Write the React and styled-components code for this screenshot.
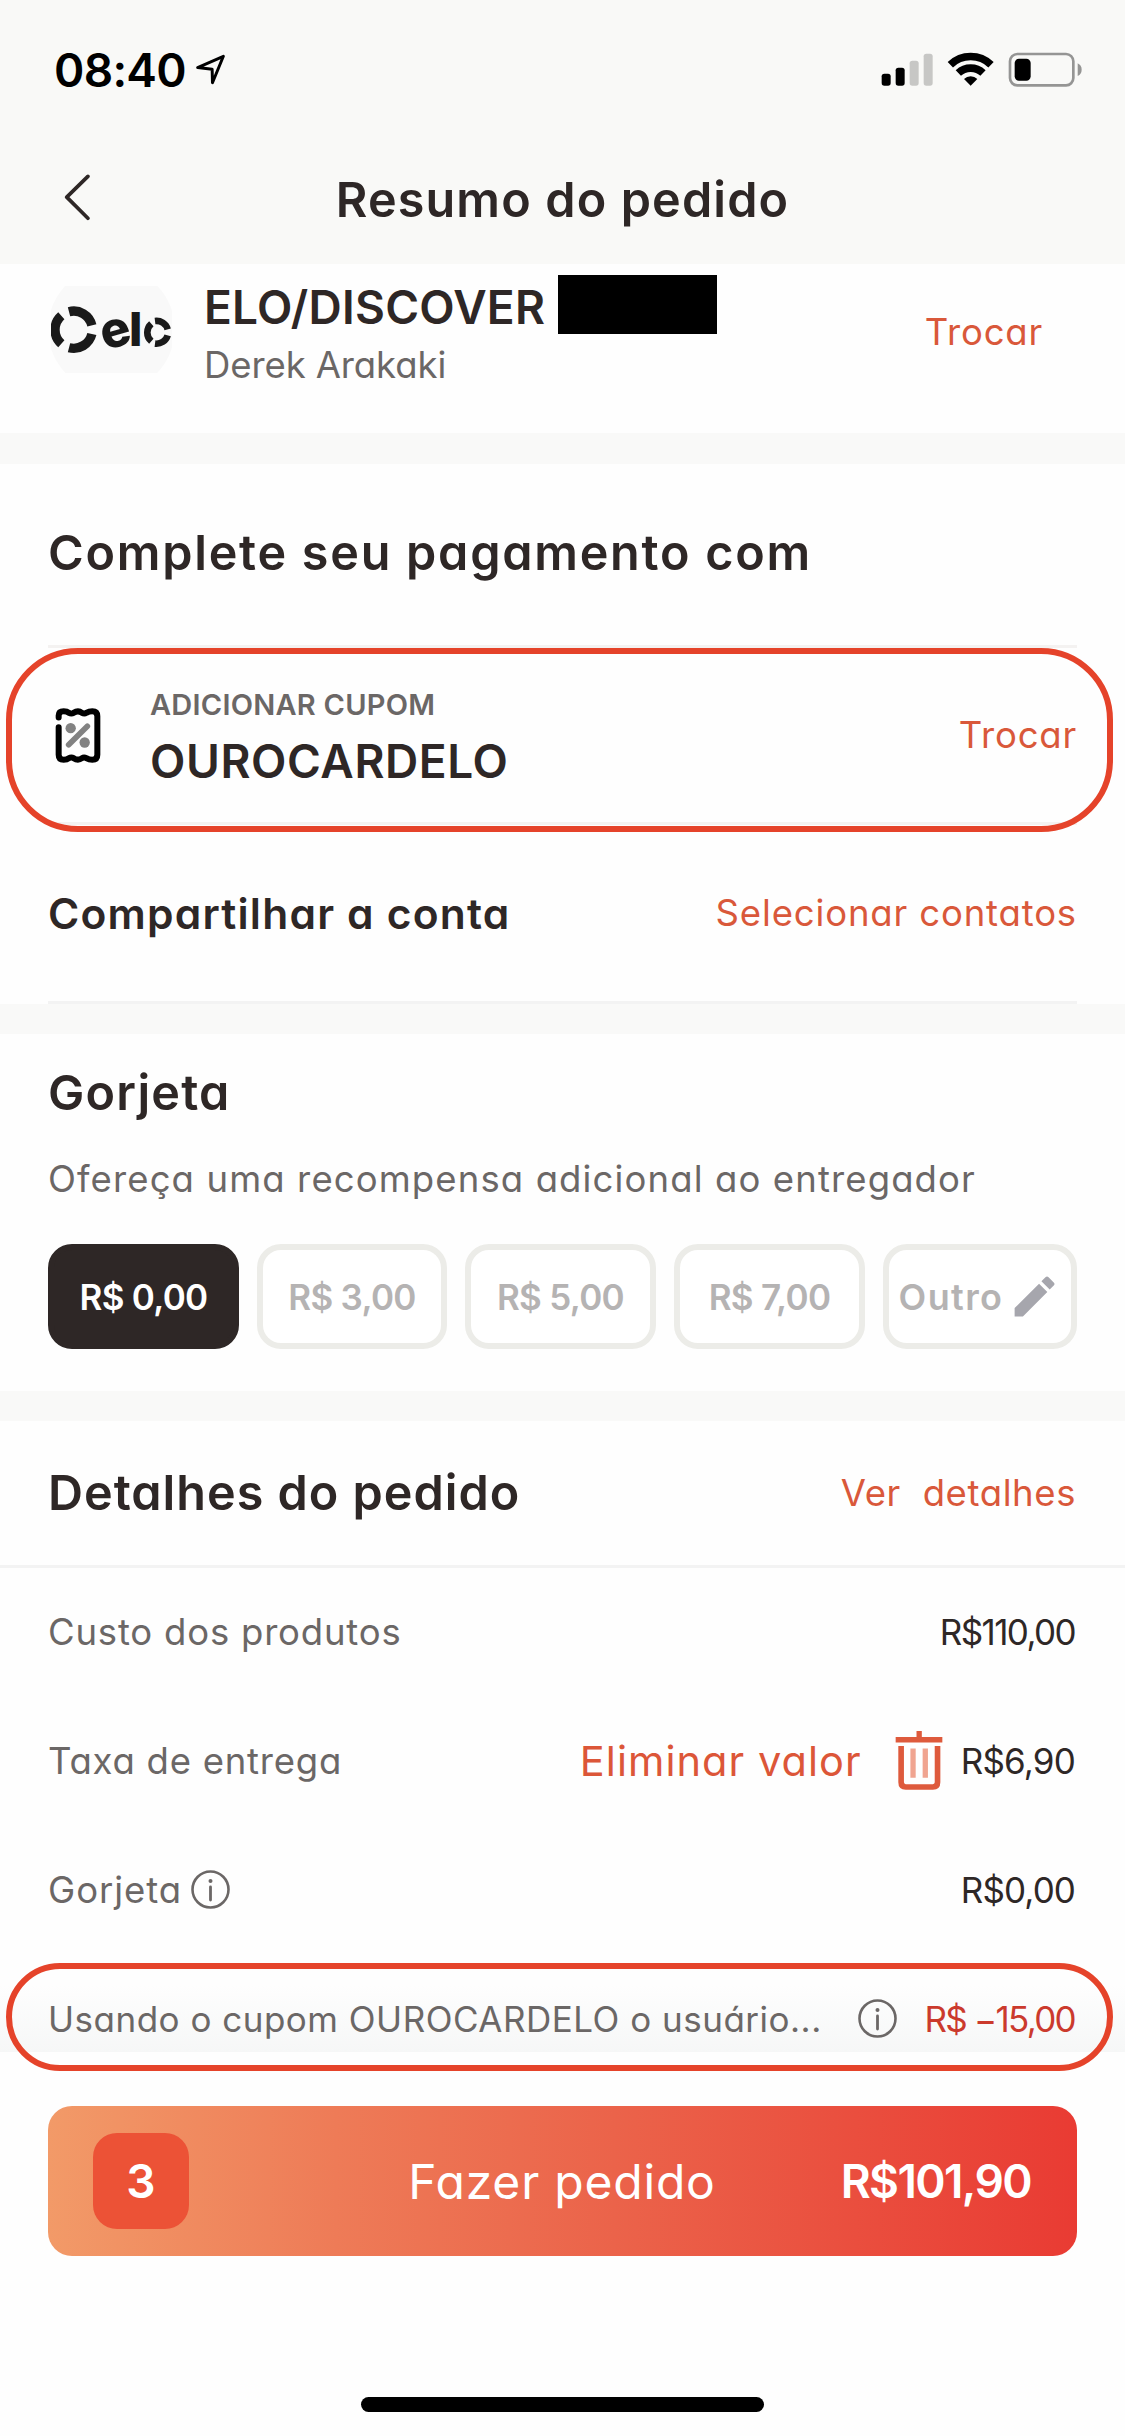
import React from 'react'
import styled, { createGlobalStyle } from 'styled-components'
import { MdEdit } from 'react-icons/md'


const tips = [
    { label: 'R$ 0,00', width: 191, active: true },
    { label: 'R$ 3,00', width: 190 },
    { label: 'R$ 5,00', width: 191 },
    { label: 'R$ 7,00', width: 191 },
]

const InfoIcon = () => (
    <svg width="39" height="39" viewBox="0 0 39 39" fill="none" stroke="#6b6766">
        <circle cx="19.5" cy="19.5" r="18" strokeWidth="2.6" />
        <circle cx="19.5" cy="11" r="2" fill="#6b6766" stroke="none" />
        <path d="M19.5 17v13" strokeWidth="2.8" strokeLinecap="round" />
    </svg>
)

const TrashIcon = () => (
    <svg width="48" height="61" viewBox="107 95 145 182">
        <path d="M109 115h63V97h16v18h62v17H109z" fill="#de5a3c" />
        <path d="M125.500 142V252q0 14 14 14h82q14 0 14-14V142" fill="none" stroke="#de5a3c" strokeWidth="17" />
        <path d="M161.500 150v88M198.500 150v88" stroke="#f0a490" strokeWidth="16" />
    </svg>
)

const CouponIcon = () => (
    <svg width="46" height="57" viewBox="76 78 138 170" fill="none">
        <path
            d="M87 109V103Q87 90 102 90Q112 90 118 95Q125 99 132 95Q145 86 157 95Q164 99 170 95Q178 90 188 90Q203 90 203 105V221Q203 236 188 236Q178 236 170 231Q163 227 157 231Q145 240 132 231Q125 227 118 231Q112 236 102 236Q87 236 87 221V138"
            stroke="#000" strokeWidth="18" strokeLinecap="round" strokeLinejoin="round"
        />
        <circle cx="123" cy="141" r="15.500" fill="#828282" />
        <circle cx="165" cy="184" r="15.500" fill="#828282" />
        <path d="M117 191L173 135" stroke="#828282" strokeWidth="17" strokeLinecap="round" />
    </svg>
)

const EloLogo = () => (
    <svg width="121" height="87" viewBox="33 33 363 261">
        <circle cx="214" cy="163" r="190" fill="#f9f9f9" />
        <g fill="none" stroke="#1a1a1a" strokeWidth="28">
            <path d="M64 122A56 56 0 0 0 64 206" />
            <path d="M87 110A56 56 0 0 1 155.600 151" />
            <path d="M155.600 177A56 56 0 0 1 87 218" />
        </g>
        <g fill="none" stroke="#1a1a1a" strokeWidth="20">
            <path d="M334 146A35 35 0 0 0 334 199" />
            <path d="M345 138A35 35 0 0 1 383 163" />
            <path d="M383 181A35 35 0 0 1 345 206" />
        </g>
        <LogoText x="181" y="215" $s={150} transform="rotate(-16 228 172)">e</LogoText>
        <LogoText x="267" y="214" $s={142}>l</LogoText>
    </svg>
)

function StatusIcons() {
    return (
        <svg width="202" height="36" viewBox="64 64 606 108">
            <rect x="66" y="129" width="27" height="36" rx="8" />
            <rect x="108" y="111" width="27" height="54" rx="8" />
            <rect x="150" y="90" width="27" height="75" rx="8" fill="#c7c7c5" />
            <rect x="192" y="69" width="27" height="96" rx="8" fill="#c7c7c5" />
            <g fill="none" stroke="#000" strokeWidth="23">
                <path d="M272 102A88 88 0 0 1 394 102" />
                <path d="M296 127A54 54 0 0 1 370 127" />
            </g>
            <path d="M333 165L313 145A29 29 0 0 1 353 145Z" />
            <rect x="451" y="70" width="190" height="94" rx="22" fill="none" stroke="#959594" strokeWidth="8" />
            <rect x="465" y="84" width="48" height="66" rx="13" />
            <path d="M654 98Q666 104 666 117Q666 130 654 136Z" fill="#959594" />
        </svg>
    )
}

function App() {
    return (
        <Screen>
            <GlobalStyle />

            <StatusBar>
                <Clock>08:40</Clock>
                <svg width="31" height="31" viewBox="464 40 94 92">
                    <path d="M472 80L550 46L517 126L516 85Z" fill="none" stroke="#000" strokeWidth="9" strokeLinejoin="round" />
                </svg>
                <Spacer />
                <StatusIcons />
            </StatusBar>

            <Header>
                <BackButton>
                    <svg width="27" height="47" viewBox="72 400 80 140">
                        <path d="M143 407L80 469L143 532" fill="none" stroke="#2e2726" strokeWidth="11" strokeLinecap="round" strokeLinejoin="round" />
                    </svg>
                </BackButton>
                <HeaderTitle $ls={1.15}>Resumo do pedido</HeaderTitle>
            </Header>

            <CardSection>
                <LogoBox><EloLogo /></LogoBox>
                <CardInfo>
                    <CardName>
                        <CardBrand>ELO/DISCOVER</CardBrand>
                        <HiddenDigits />
                    </CardName>
                    <Label $ls={-0.1}>Derek Arakaki</Label>
                </CardInfo>
                <Spacer />
                <CardLink $ls={0.8}>Trocar</CardLink>
            </CardSection>

            <Band $h={31} />

            <PaymentSection>
                <PaymentTitle>
                    <Title $ls={1.750}>Complete seu pagamento com</Title>
                </PaymentTitle>
                <CouponRow>
                    <Highlight $top={0} $h={184} $r={72} />
                    <CouponIcon />
                    <CouponInfo>
                        <CouponLabel>ADICIONAR CUPOM</CouponLabel>
                        <CouponCode>OUROCARDELO</CouponCode>
                    </CouponInfo>
                    <Spacer />
                    <Link $ls={0.8}>Trocar</Link>
                </CouponRow>
                <ShareRow>
                    <ShareTitle>Compartilhar a conta</ShareTitle>
                    <Spacer />
                    <Link $ls={0.85}>Selecionar contatos</Link>
                </ShareRow>
            </PaymentSection>

            <Band $h={30} />

            <TipSection>
                <Title $ls={1.200}>Gorjeta</Title>
                <TipText $ls={1.12}>Ofereça uma recompensa adicional ao entregador</TipText>
                <TipList>
                    {tips.map(tip => (
                        <TipButton key={tip.label} $w={tip.width} $active={tip.active}>{tip.label}</TipButton>
                    ))}
                    <TipButton $w={194} $wide>
                        Outro <MdEdit size={53} color="#a6a6ad" />
                    </TipButton>
                </TipList>
            </TipSection>

            <Band $h={30} />

            <DetailsHeader>
                <Title $ls={1}>Detalhes do pedido</Title>
                <Spacer />
                <Link $ls={0.6}>{'Ver\u00a0 detalhes'}</Link>
            </DetailsHeader>

            <DetailRow>
                <Label $ls={0.8}>Custo dos produtos</Label>
                <Spacer />
                <Price $ls={-1.6}>R$110,00</Price>
            </DetailRow>
            <DetailRow>
                <Label $ls={0.76}>Taxa de entrega</Label>
                <Spacer />
                <RemoveFee>Eliminar valor</RemoveFee>
                <TrashIcon />
                <Price $ls={-0.8} $left={18}>R$6,90</Price>
            </DetailRow>
            <DetailRow>
                <Label $ls={0.95}>Gorjeta</Label>
                <InfoWrap $left={9}><InfoIcon /></InfoWrap>
                <Spacer />
                <Price $ls={-0.9}>R$0,00</Price>
            </DetailRow>
            <DiscountRow>
                <Highlight $top={8} $h={108} $r={55} />
                <DiscountLabel $ls={0.5}>Usando o cupom OUROCARDELO o usuário...</DiscountLabel>
                <Spacer />
                <InfoWrap><InfoIcon /></InfoWrap>
                <Price $ls={-1.7} $left={27} $discount>R$ −15,00</Price>
            </DiscountRow>

            <OrderButton>
                <Count>3</Count>
                <OrderLabel>Fazer pedido</OrderLabel>
                <Total>R$101,90</Total>
            </OrderButton>

            <HomeIndicator />
        </Screen>
    )
}

export default App

const GlobalStyle = createGlobalStyle`
    body {
        margin: 0;
        background: #fefefe;
    }
`
const Screen = styled.div`
    width: 1125px;
    height: 2436px;
    display: flex;
    flex-direction: column;
    overflow: hidden;
    background: #fefefe;
    color: #2e2726;
    font-family: Inter, sans-serif;
    font-feature-settings: 'cv11';
    white-space: nowrap;

    svg {
        display: block;
        flex-shrink: 0;
    }
`
const Spacer = styled.div`
    flex: 1;
`
const Band = styled.div`
    height: ${p => p.$h}px;
    flex-shrink: 0;
    background: #f9f9f8;
`
const Title = styled.h1`
    margin: 0;
    font-size: 48.5px;
    font-weight: 600;
    line-height: 58px;
    letter-spacing: ${p => p.$ls}px;
`
const Label = styled.div`
    color: #6b6766;
    font-size: 36.5px;
    line-height: 58px;
    letter-spacing: ${p => p.$ls}px;
`
const Link = styled.div`
    color: #d9583a;
    font-size: 36.5px;
    line-height: 58px;
    letter-spacing: ${p => p.$ls}px;
    padding-bottom: 1px;
`

const StatusBar = styled.div`
    height: 140px;
    flex-shrink: 0;
    display: flex;
    align-items: center;
    box-sizing: border-box;
    padding: 0 42px 1px 54px;
    background: #f9f9f7;
    color: #000;
`
const Clock = styled.div`
    width: 141px;
    font-size: 46px;
    font-weight: 600;
    letter-spacing: -0.7px;
`
const Header = styled.div`
    height: 124px;
    flex-shrink: 0;
    display: grid;
    grid-template-columns: 1fr auto 1fr;
    align-items: center;
    box-sizing: border-box;
    padding: 4px 48px 0;
    background: #f9f9f7;
`
const HeaderTitle = styled(Title)`
    padding-bottom: 9px;
`
const BackButton = styled.div`
    padding: 0 0 14px 16px;
`

const CardSection = styled.div`
    height: 169px;
    flex-shrink: 0;
    display: flex;
    align-items: center;
    box-sizing: border-box;
    padding: 14px 82px 39px 51px;
`
const LogoBox = styled.div`
    margin: 0 32px 13px 0;
`
const LogoText = styled.text`
    font-size: ${p => p.$s}px;
    font-weight: 800;
    fill: #1a1a1a;
`
const CardInfo = styled.div`
`
const CardName = styled.div`
    display: flex;
    align-items: center;
    height: 58px;
`
const CardBrand = styled.div`
    width: 354px;
    font-size: 46px;
    font-weight: 600;
    letter-spacing: 0.25px;
`
const HiddenDigits = styled.div`
    width: 159px;
    height: 59px;
    margin-bottom: 5px;
    background: #000;
`
const CardLink = styled(Link)`
    margin-bottom: 8px;
`

const PaymentSection = styled.div`
    flex-shrink: 0;
    padding: 0 48px;
`
const PaymentTitle = styled.div`
    height: 184px;
    display: flex;
    align-items: center;
    box-sizing: border-box;
    padding-bottom: 3px;
    border-bottom: 3px solid #f4f2f1;
`
const CouponRow = styled.div`
    position: relative;
    height: 177px;
    display: flex;
    align-items: center;
    box-sizing: border-box;
    padding-left: 7px;
    border-bottom: 3px solid #f4f2f1;
`
/* red outline drawn over the rows affected by the coupon */
const Highlight = styled.div`
    position: absolute;
    left: -42px;
    top: ${p => p.$top}px;
    width: 1107px;
    height: ${p => p.$h}px;
    box-sizing: border-box;
    border: 6px solid #e5432a;
    border-radius: ${p => p.$r}px;
`
const CouponInfo = styled.div`
    margin: 0 0 5px 49px;
`
const CouponLabel = styled.div`
    color: #6b6766;
    font-size: 29px;
    font-weight: 600;
    line-height: 57px;
    letter-spacing: 0.25px;
`
const CouponCode = styled.div`
    font-size: 46px;
    font-weight: 600;
    line-height: 57px;
    letter-spacing: 0.6px;
`
const ShareRow = styled.div`
    height: 179px;
    display: flex;
    align-items: center;
    box-sizing: border-box;
    border-bottom: 3px solid #f3f3f3;
`
const ShareTitle = styled.div`
    font-size: 42.5px;
    font-weight: 600;
    letter-spacing: 1.2px;
`

const TipSection = styled.div`
    height: 357px;
    flex-shrink: 0;
    box-sizing: border-box;
    padding: 30px 48px 0;
`
const TipText = styled(Label)`
    margin-top: 28px;
`
const TipList = styled.div`
    display: flex;
    justify-content: space-between;
    margin-top: 36px;
`
const TipButton = styled.div`
    width: ${p => p.$w}px;
    height: 105px;
    display: flex;
    align-items: center;
    justify-content: center;
    gap: 5px;
    box-sizing: border-box;
    border: 6px solid ${p => p.$active ? '#2e2726' : '#ecece8'};
    border-radius: 24px;
    background: ${p => p.$active ? '#2e2726' : '#fff'};
    color: ${p => p.$active ? '#fff' : '#b5b3b3'};
    font-size: ${p => p.$wide ? 36 : 35}px;
    font-weight: 600;
    letter-spacing: ${p => p.$wide ? 1.4 : -0.7}px;
`

const DetailsHeader = styled.div`
    height: 147px;
    flex-shrink: 0;
    display: flex;
    align-items: center;
    box-sizing: border-box;
    padding: 0 49px 0 48px;
    border-bottom: 3px solid #f3f3f3;
`
const DetailRow = styled.div`
    height: 129px;
    flex-shrink: 0;
    display: flex;
    align-items: center;
    box-sizing: border-box;
    padding: 0 50px 2px 48px;
`
const DiscountRow = styled(DetailRow)`
    position: relative;
    background: linear-gradient(rgba(246, 247, 247, 0) 30px, #f6f7f7 97px, transparent 97px);

    ${Highlight} {
        left: 6px;
    }
`
const DiscountLabel = styled(Label)`
    font-size: 35px;
`
const Price = styled.div`
    color: ${p => p.$discount ? '#cb3a2d' : '#2e2726'};
    font-size: 35px;
    letter-spacing: ${p => p.$ls}px;
    margin-left: ${p => p.$left || 0}px;
`
const RemoveFee = styled.div`
    color: #dc5638;
    font-size: 41.5px;
    letter-spacing: 1.05px;
    margin-right: 33px;
`
const InfoWrap = styled.div`
    margin-left: ${p => p.$left || 0}px;
`

const OrderButton = styled.div`
    height: 150px;
    flex-shrink: 0;
    display: grid;
    grid-template-columns: 1fr auto 1fr;
    align-items: center;
    box-sizing: border-box;
    margin: 22px 48px 0;
    padding: 0 46px 0 45px;
    border-radius: 24px;
    background: linear-gradient(90deg, #f29a68 0%, #ee7b57 28%, #eb634a 55%, #e93b33 100%);
    color: #fff;
    font-size: 46px;
`
const Count = styled.div`
    width: 96px;
    height: 96px;
    border-radius: 24px;
    background: #ec5236;
    font-weight: 600;
    line-height: 96px;
    text-align: center;
`
const OrderLabel = styled.div`
    font-size: 48px;
    letter-spacing: 0.8px;
`
const Total = styled.div`
    justify-self: end;
    font-weight: 600;
    letter-spacing: -1.6px;
`
const HomeIndicator = styled.div`
    width: 403px;
    height: 15px;
    flex-shrink: 0;
    margin: 141px auto 0;
    border-radius: 8px;
    background: #000;
`
